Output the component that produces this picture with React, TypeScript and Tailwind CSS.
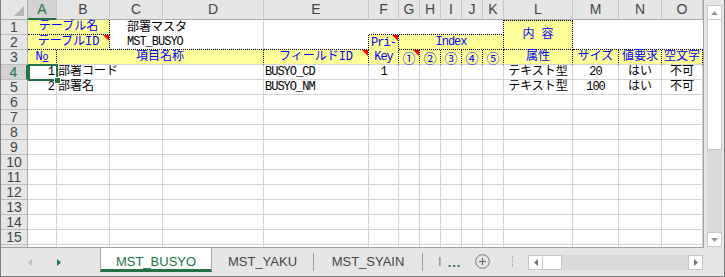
import React from "react";

const W = [
  "w-[27px]",
  "w-[29px]",
  "w-[53px]",
  "w-[53px]",
  "w-[101px]",
  "w-[105px]",
  "w-[30px]",
  "w-[21px]",
  "w-[21px]",
  "w-[21px]",
  "w-[21px]",
  "w-[21px]",
  "w-[69px]",
  "w-[46px]",
  "w-[43px]",
  "w-[41px]",
];
const LETTERS = ["A", "B", "C", "D", "E", "F", "G", "H", "I", "J", "K", "L", "M", "N", "O"];

const cellFont = "font-['Liberation_Mono','Noto_Sans_CJK_JP',monospace]";
const yel = "bg-[#ffff99] text-[#0000ff]";
const rowHdr =
  "flex items-center justify-center bg-[#e6e6e6] border-r border-b border-[#bdbdbd] border-r-[#ababab] text-[14px] leading-[14px] text-[#444]";
const dot = "border-dotted border-black";
const hdr3 =
  "border-r border-b border-[#d4d4d4] border-r-black [border-right-style:dotted] relative flex items-center justify-center";
const circ = "font-['Noto_Sans_CJK_JP',sans-serif] text-[13px] leading-[13px]";

function Tri() {
  return (
    <svg className="absolute right-0 top-0" width="6" height="6">
      <polygon points="0,0 6,0 6,6" fill="#ff0000" />
    </svg>
  );
}

function Asc({ children }: { children: React.ReactNode }) {
  return <span className="tracking-[-1px]">{children}</span>;
}

function HeaderRow() {
  return (
    <div className="flex h-[20px]">
      <div className="w-[27px] shrink-0 flex items-end justify-end pr-[3px] pb-[3px] bg-[#e6e6e6] border-r border-b border-[#ababab]">
        <svg width="10" height="10">
          <polygon points="10,0 10,10 0,10" fill="#b4b4b4" />
        </svg>
      </div>
      {LETTERS.map((l, i) => (
        <div
          key={l}
          className={`${W[i + 1]} shrink-0 flex items-center justify-center text-[14px] border-r border-[#c6c6c6] ${
            i === 0
              ? "bg-[#d2d2d2] text-[#217346] border-b-2 border-b-[#217346]"
              : "bg-[#e6e6e6] text-[#444] border-b border-b-[#ababab]"
          }`}
        >
          {l}
        </div>
      ))}
    </div>
  );
}

function TopBlock() {
  return (
    <div
      className={`grid grid-cols-[27px_29px_53px_53px_101px_105px_30px_21px_21px_21px_21px_21px_69px_46px_43px_41px] grid-rows-[15px_15px_15px] text-[12px] leading-[14px] ${cellFont}`}
    >
      <div className={`col-[1/2] row-[1/2] font-['Liberation_Sans',sans-serif] ${rowHdr}`}>1</div>
      <div className={`col-[1/2] row-[2/3] font-['Liberation_Sans',sans-serif] ${rowHdr}`}>2</div>
      <div className={`col-[1/2] row-[3/4] font-['Liberation_Sans',sans-serif] ${rowHdr}`}>3</div>

      <div className={`col-[2/4] row-[1/2] flex items-center justify-center border-r border-b ${dot} ${yel}`}>
        テーブル名
      </div>
      <div className="col-[4/6] row-[1/3] flex flex-col pl-[17px] border-r border-b border-[#d4d4d4] border-b-black [border-bottom-style:dotted]">
        <div className="h-[15px] flex items-center">部署マスタ</div>
        <div className="h-[14px] flex items-center">
          <Asc>MST_BUSYO</Asc>
        </div>
      </div>
      <div className="col-[6/7] row-[1/2]" />
      <div className={`col-[7/13] row-[1/2] border-r border-b ${dot}`} />
      <div className={`col-[13/14] row-[1/3] flex items-center justify-center border-t border-r border-b ${dot} ${yel}`}>
        内 容
      </div>
      <div className={`col-[14/17] row-[1/3] border-b ${dot}`} />

      <div className={`col-[2/4] row-[2/3] relative flex items-center justify-center border-r border-b ${dot} ${yel}`}>
        テーブルID
        <Tri />
      </div>
      <div className={`col-[6/7] row-[2/3] border-r border-b ${dot}`} />
      <div className={`col-[7/8] row-[2/4] flex-col ${hdr3} ${yel}`}>
        <div className="h-[15px] flex items-center">
          <Asc>Pri-</Asc>
        </div>
        <div className="h-[14px] flex items-center">
          <Asc>Key</Asc>
        </div>
        <Tri />
      </div>
      <div className={`col-[8/13] row-[2/3] flex items-center justify-center border-r border-b ${dot} ${yel}`}>
        <Asc>Index</Asc>
      </div>

      <div className={`col-[2/3] row-[3/4] ${hdr3} ${yel}`}>
        <span>
          N<span className="underline text-[10px]">o</span>
        </span>
      </div>
      <div className={`col-[3/6] row-[3/4] ${hdr3} ${yel}`}>項目名称</div>
      <div className={`col-[6/7] row-[3/4] ${hdr3} ${yel}`}>
        フィールドID
        <Tri />
      </div>
      <div className={`col-[8/9] row-[3/4] ${hdr3} ${yel}`}>
        <span className={circ}>①</span>
        <Tri />
      </div>
      <div className={`col-[9/10] row-[3/4] ${hdr3} ${yel}`}>
        <span className={circ}>②</span>
      </div>
      <div className={`col-[10/11] row-[3/4] ${hdr3} ${yel}`}>
        <span className={circ}>③</span>
      </div>
      <div className={`col-[11/12] row-[3/4] ${hdr3} ${yel}`}>
        <span className={circ}>④</span>
      </div>
      <div className={`col-[12/13] row-[3/4] ${hdr3} ${yel}`}>
        <span className={circ}>⑤</span>
      </div>
      <div className={`col-[13/14] row-[3/4] ${hdr3} ${yel}`}>属性</div>
      <div className={`col-[14/15] row-[3/4] ${hdr3} ${yel}`}>サイズ</div>
      <div className={`col-[15/16] row-[3/4] ${hdr3} ${yel}`}>値要求</div>
      <div className={`col-[16/17] row-[3/4] ${hdr3} ${yel}`}>空文字</div>
    </div>
  );
}

type Cell = { text: React.ReactNode; align: "l" | "c" | "r" };

const DATA: Record<number, Record<number, Cell>> = {
  4: {
    1: { text: <Asc>1</Asc>, align: "r" },
    2: { text: "部署コード", align: "l" },
    5: { text: <Asc>BUSYO_CD</Asc>, align: "l" },
    6: { text: <Asc>1</Asc>, align: "c" },
    12: { text: "テキスト型", align: "c" },
    13: { text: <Asc>20</Asc>, align: "c" },
    14: { text: "はい", align: "c" },
    15: { text: "不可", align: "c" },
  },
  5: {
    1: { text: <Asc>2</Asc>, align: "r" },
    2: { text: "部署名", align: "l" },
    5: { text: <Asc>BUSYO_NM</Asc>, align: "l" },
    12: { text: "テキスト型", align: "c" },
    13: { text: <Asc>100</Asc>, align: "c" },
    14: { text: "はい", align: "c" },
    15: { text: "不可", align: "c" },
  },
};

function DataRow({ n }: { n: number }) {
  const cells = DATA[n] || {};
  const sel = n === 4;
  return (
    <div className={`flex h-[15px] text-[12px] leading-[14px] ${cellFont}`}>
      <div
        className={`w-[27px] shrink-0 flex items-center justify-center border-b border-[#bdbdbd] font-['Liberation_Sans',sans-serif] text-[14px] ${
          sel ? "bg-[#d2d2d2] text-[#217346] border-r-2 border-r-[#217346]" : "bg-[#e6e6e6] text-[#444] border-r border-r-[#ababab]"
        }`}
      >
        {n <= 15 ? n : null}
      </div>
      {W.slice(1).map((w, j) => {
        const i = j + 1;
        const c = cells[i];
        const noRight = n === 4 && i === 2;
        const align = c ? (c.align === "r" ? "justify-end pr-[2px]" : c.align === "c" ? "justify-center" : "justify-start pl-[1px]") : "";
        return (
          <div
            key={i}
            className={`${w} shrink-0 flex items-center whitespace-nowrap border-b border-[#d4d4d4] ${noRight ? "" : "border-r"} ${align} ${
              sel && i === 1 ? "relative" : ""
            }`}
          >
            {c ? c.text : null}
            {sel && i === 1 && (
              <>
                <div className="absolute left-0 -top-[1px] w-[30px] h-[17px] border-2 border-[#217346] z-10" />
                <div className="absolute left-[26px] top-[12px] w-[7px] h-[7px] bg-[#217346] border border-white z-20" />
              </>
            )}
          </div>
        );
      })}
    </div>
  );
}

function VScroll() {
  return (
    <div className="ml-[3px] mt-[5px] w-[15px] h-[242px] shrink-0 flex flex-col bg-[#dadada]">
      <div className="h-[15px] shrink-0 bg-white border border-[#c6c6c6] flex items-center justify-center">
        <svg width="7" height="4">
          <polygon points="3.5,0 7,4 0,4" fill="#9a9a9a" />
        </svg>
      </div>
      <div className="h-[130px] shrink-0 bg-white border-x border-b border-[#c6c6c6]" />
      <div className="flex-1" />
      <div className="h-[15px] shrink-0 bg-white border border-[#c6c6c6] flex items-center justify-center">
        <svg width="7" height="4">
          <polygon points="0,0 7,0 3.5,4" fill="#9a9a9a" />
        </svg>
      </div>
    </div>
  );
}

function TabBar() {
  return (
    <div className="flex h-[28px] shrink-0 items-start text-[13px] text-[#444]">
      <div className="w-[99px] h-[24px] shrink-0 flex items-center pt-[4px] pl-[27px] gap-[25px]">
        <svg width="4" height="7">
          <polygon points="4,0 4,7 0,3.5" fill="#bdbdbd" />
        </svg>
        <svg width="4" height="7">
          <polygon points="0,0 0,7 4,3.5" fill="#217346" />
        </svg>
      </div>
      <div className="w-[112px] h-[24px] shrink-0 bg-white border-x border-[#ababab] border-b-[3px] border-b-[#217346] pt-[6px] flex items-center justify-center text-[#217346]">
        MST_BUSYO
      </div>
      <div className="w-[101px] h-[24px] shrink-0 pt-[4px] flex items-center justify-center">MST_YAKU</div>
      <div className="w-px h-[18px] mt-[5px] shrink-0 bg-[#9c9c9c]" />
      <div className="w-[108px] h-[24px] shrink-0 pt-[4px] flex items-center justify-center">MST_SYAIN</div>
      <div className="w-px h-[18px] mt-[5px] shrink-0 bg-[#9c9c9c]" />
      <div className="w-[46px] h-[24px] shrink-0 pt-[4px] pl-[15px] flex items-center gap-[6px]">
        <span className="text-[#888]">I</span>
        <span className="text-[#217346] font-bold tracking-[1px] leading-none">...</span>
      </div>
      <div className="ml-[6px] mt-[6px] shrink-0">
        <svg width="15" height="15">
          <circle cx="7.5" cy="7.5" r="6.8" fill="none" stroke="#777" strokeWidth="1" />
          <line x1="4" y1="7.5" x2="11" y2="7.5" stroke="#666" strokeWidth="1.2" />
          <line x1="7.5" y1="4" x2="7.5" y2="11" stroke="#666" strokeWidth="1.2" />
        </svg>
      </div>
      <div className="ml-[22px] mt-[8px] w-px h-[11px] shrink-0 border-l border-dotted border-[#9a9a9a]" />
      <div className="ml-[15px] mt-[7px] w-[175px] h-[15px] shrink-0 flex bg-[#dadada]">
        <div className="w-[15px] h-[15px] bg-white border border-[#c6c6c6] flex items-center justify-center">
          <svg width="4" height="7">
            <polygon points="4,0 4,7 0,3.5" fill="#777" />
          </svg>
        </div>
        <div className="w-[19px] h-[15px] bg-white border-y border-r border-[#c6c6c6]" />
        <div className="flex-1" />
        <div className="w-[15px] h-[15px] bg-white border border-[#c6c6c6] flex items-center justify-center">
          <svg width="4" height="7">
            <polygon points="0,0 0,7 4,3.5" fill="#777" />
          </svg>
        </div>
      </div>
    </div>
  );
}

export default function App() {
  const rows = [4, 5, 6, 7, 8, 9, 10, 11, 12, 13, 14, 15, 16];
  return (
    <div className="w-[725px] h-[277px] flex flex-col bg-[#e6e6e6] border-x border-b border-[#7f7f7f] overflow-hidden font-['Liberation_Sans',Arial,sans-serif]">
      <div className="flex h-[248px] shrink-0">
        <div className="w-[703px] h-[248px] shrink-0 border-r border-b border-[#9f9f9f] bg-white overflow-hidden text-black">
          <HeaderRow />
          <TopBlock />
          {rows.map((n) => (
            <DataRow key={n} n={n} />
          ))}
        </div>
        <VScroll />
      </div>
      <TabBar />
    </div>
  );
}
